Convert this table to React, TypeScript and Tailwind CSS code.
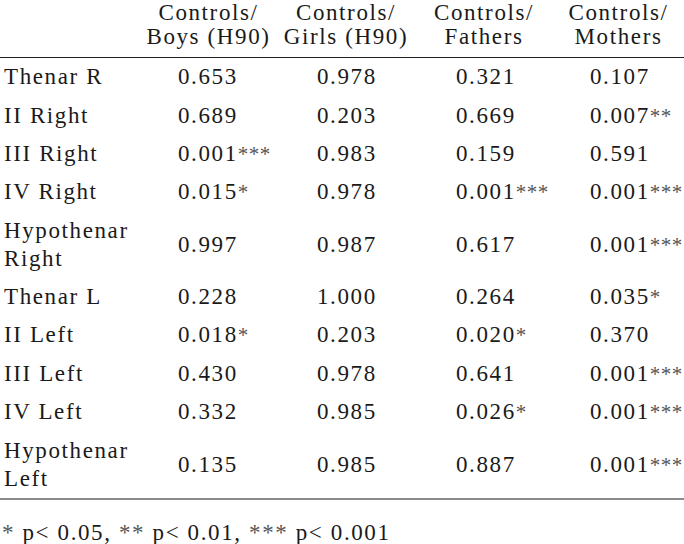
import React from "react";

type Row = { label: string[]; vals: string[] };

const rows: Row[] = [
  { label: ["Thenar R"], vals: ["0.653", "0.978", "0.321", "0.107"] },
  { label: ["II Right"], vals: ["0.689", "0.203", "0.669", "0.007**"] },
  { label: ["III Right"], vals: ["0.001***", "0.983", "0.159", "0.591"] },
  { label: ["IV Right"], vals: ["0.015*", "0.978", "0.001***", "0.001***"] },
  { label: ["Hypothenar", "Right"], vals: ["0.997", "0.987", "0.617", "0.001***"] },
  { label: ["Thenar L"], vals: ["0.228", "1.000", "0.264", "0.035*"] },
  { label: ["II Left"], vals: ["0.018*", "0.203", "0.020*", "0.370"] },
  { label: ["III Left"], vals: ["0.430", "0.978", "0.641", "0.001***"] },
  { label: ["IV Left"], vals: ["0.332", "0.985", "0.026*", "0.001***"] },
  { label: ["Hypothenar", "Left"], vals: ["0.135", "0.985", "0.887", "0.001***"] },
];

const headers = [
  ["Controls/", "Boys (H90)"],
  ["Controls/", "Girls (H90)"],
  ["Controls/", "Fathers"],
  ["Controls/", "Mothers"],
];

const valPad = ["pl-[38px]", "pl-[40px]", "pl-[41px]", "pl-[37px]"];

function Val({ v }: { v: string }) {
  const m = v.match(/^([0-9.]+)(\**)$/);
  const num = m ? m[1] : v;
  const stars = m ? m[2] : "";
  return (
    <span>
      {num}
      {stars && <span className="text-[#555] text-[21px] tracking-[0.02em]">{stars}</span>}
    </span>
  );
}

export default function App() {
  return (
    <div
      className="w-[684px] h-[544px] bg-white text-[#1a1a1a] text-[23px] tracking-[0.07em] overflow-hidden"
      style={{ fontFamily: '"Liberation Serif", "Times New Roman", serif' }}
    >
      <div className="grid grid-cols-[140px_137px_138px_138px_131px] pt-[1px] pb-[8px] leading-[24px] border-b-[1.5px] border-[#222]">
        <div />
        {headers.map((h, i) => (
          <div key={i} className="text-center whitespace-nowrap">
            <div>{h[0]}</div>
            <div>{h[1]}</div>
          </div>
        ))}
      </div>
      <div className="border-b-2 border-[#8a8a8a]">
        {rows.map((r, i) => (
          <div
            key={i}
            className="grid grid-cols-[140px_137px_138px_138px_131px] items-center py-[5.2px] leading-[28px]"
          >
            <div className="pl-[4px] whitespace-nowrap">
              {r.label.map((l, j) => (
                <div key={j}>{l}</div>
              ))}
            </div>
            {r.vals.map((v, j) => (
              <div key={j} className={`${valPad[j]} whitespace-nowrap`}>
                <Val v={v} />
              </div>
            ))}
          </div>
        ))}
      </div>
      <div className="pl-[2px] pt-[19px] leading-[28px] whitespace-nowrap">
        <span className="text-[#555]">*</span> p&lt; 0.05, <span className="text-[#555]">**</span> p&lt; 0.01,{" "}
        <span className="text-[#555]">***</span> p&lt; 0.001
      </div>
    </div>
  );
}
